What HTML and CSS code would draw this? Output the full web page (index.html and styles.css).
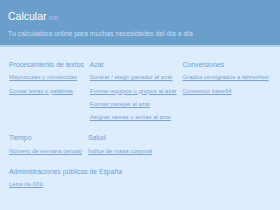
FILE: index.html
```html
<!DOCTYPE html>
<html lang="es">
  <head>
    <meta charset="UTF-8" />
    <meta name="viewport" content="width=device-width, initial-scale=1.0" />
    <title>Calcular.me</title>
    <link rel="stylesheet" href="styles.css">
  </head>
  <body>
    <div class="header">
      <div class="logo">Calcular<span class="logo-tld">.me</span></div>
      <p class="tagline">Tu calculadora online para muchas necesidades del día a día</p>
    </div>

    <div class="categories">
      <div class="category">
        <h2>Procesamiento de textos</h2>
        <a href="#">Mayúsculas y minúsculas</a>
        <a href="#">Contar letras o palabras</a>
      </div>
      <div class="category">
        <h2>Azar</h2>
        <a href="#">Sortear / elegir ganador al azar</a>
        <a href="#">Formar equipos o grupos al azar</a>
        <a href="#">Formar parejas al azar</a>
        <a href="#">Asignar tareas o temas al azar</a>
      </div>
      <div class="category">
        <h2>Conversiones</h2>
        <a href="#">Grados centígrados a fahrenheit</a>
        <a href="#">Conversor base64</a>
      </div>
      <div class="category">
        <h2>Tiempo</h2>
        <a href="#">Número de semana (anual)</a>
      </div>
      <div class="category">
        <h2>Salud</h2>
        <a href="#">Índice de masa corporal</a>
      </div>
      <div class="category">
        <h2>Administraciones públicas de España</h2>
        <a href="#">Letra de DNI</a>
      </div>
    </div>
  </body>
</html>
```

FILE: styles.css
```css
/* Base */
body {
  font-family: "Liberation Sans", Arial, sans-serif;
  margin: 0;
  padding: 0;
  background-color: #deedfe;
}

/* Header */
.header {
  background-color: #6a9fcc;
  border-bottom: 2px solid #b4d0ec;
  padding: 9px 8px 6px;
}

.logo {
  color: #ffffff;
  font-size: 10.5px;
  line-height: 14px;
}

.logo-tld {
  color: #c4b0e6;
  font-size: 7px;
}

.tagline {
  margin: 4px 0 0;
  color: #c9def4;
  font-size: 6.8px;
  line-height: 10px;
}

/* Categories */
.categories {
  display: flex;
  flex-wrap: wrap;
  column-gap: 6px;
  row-gap: 7px;
  padding: 11px 9px;
}

.category {
  display: flex;
  flex-direction: column;
}

.category h2 {
  margin: 0;
  font-size: 6.8px;
  font-weight: normal;
  line-height: 13.3px;
  color: #6a9fd8;
}

.category a {
  font-size: 6px;
  line-height: 13.3px;
  color: #7ba3d6;
  text-decoration: underline;
}
```
